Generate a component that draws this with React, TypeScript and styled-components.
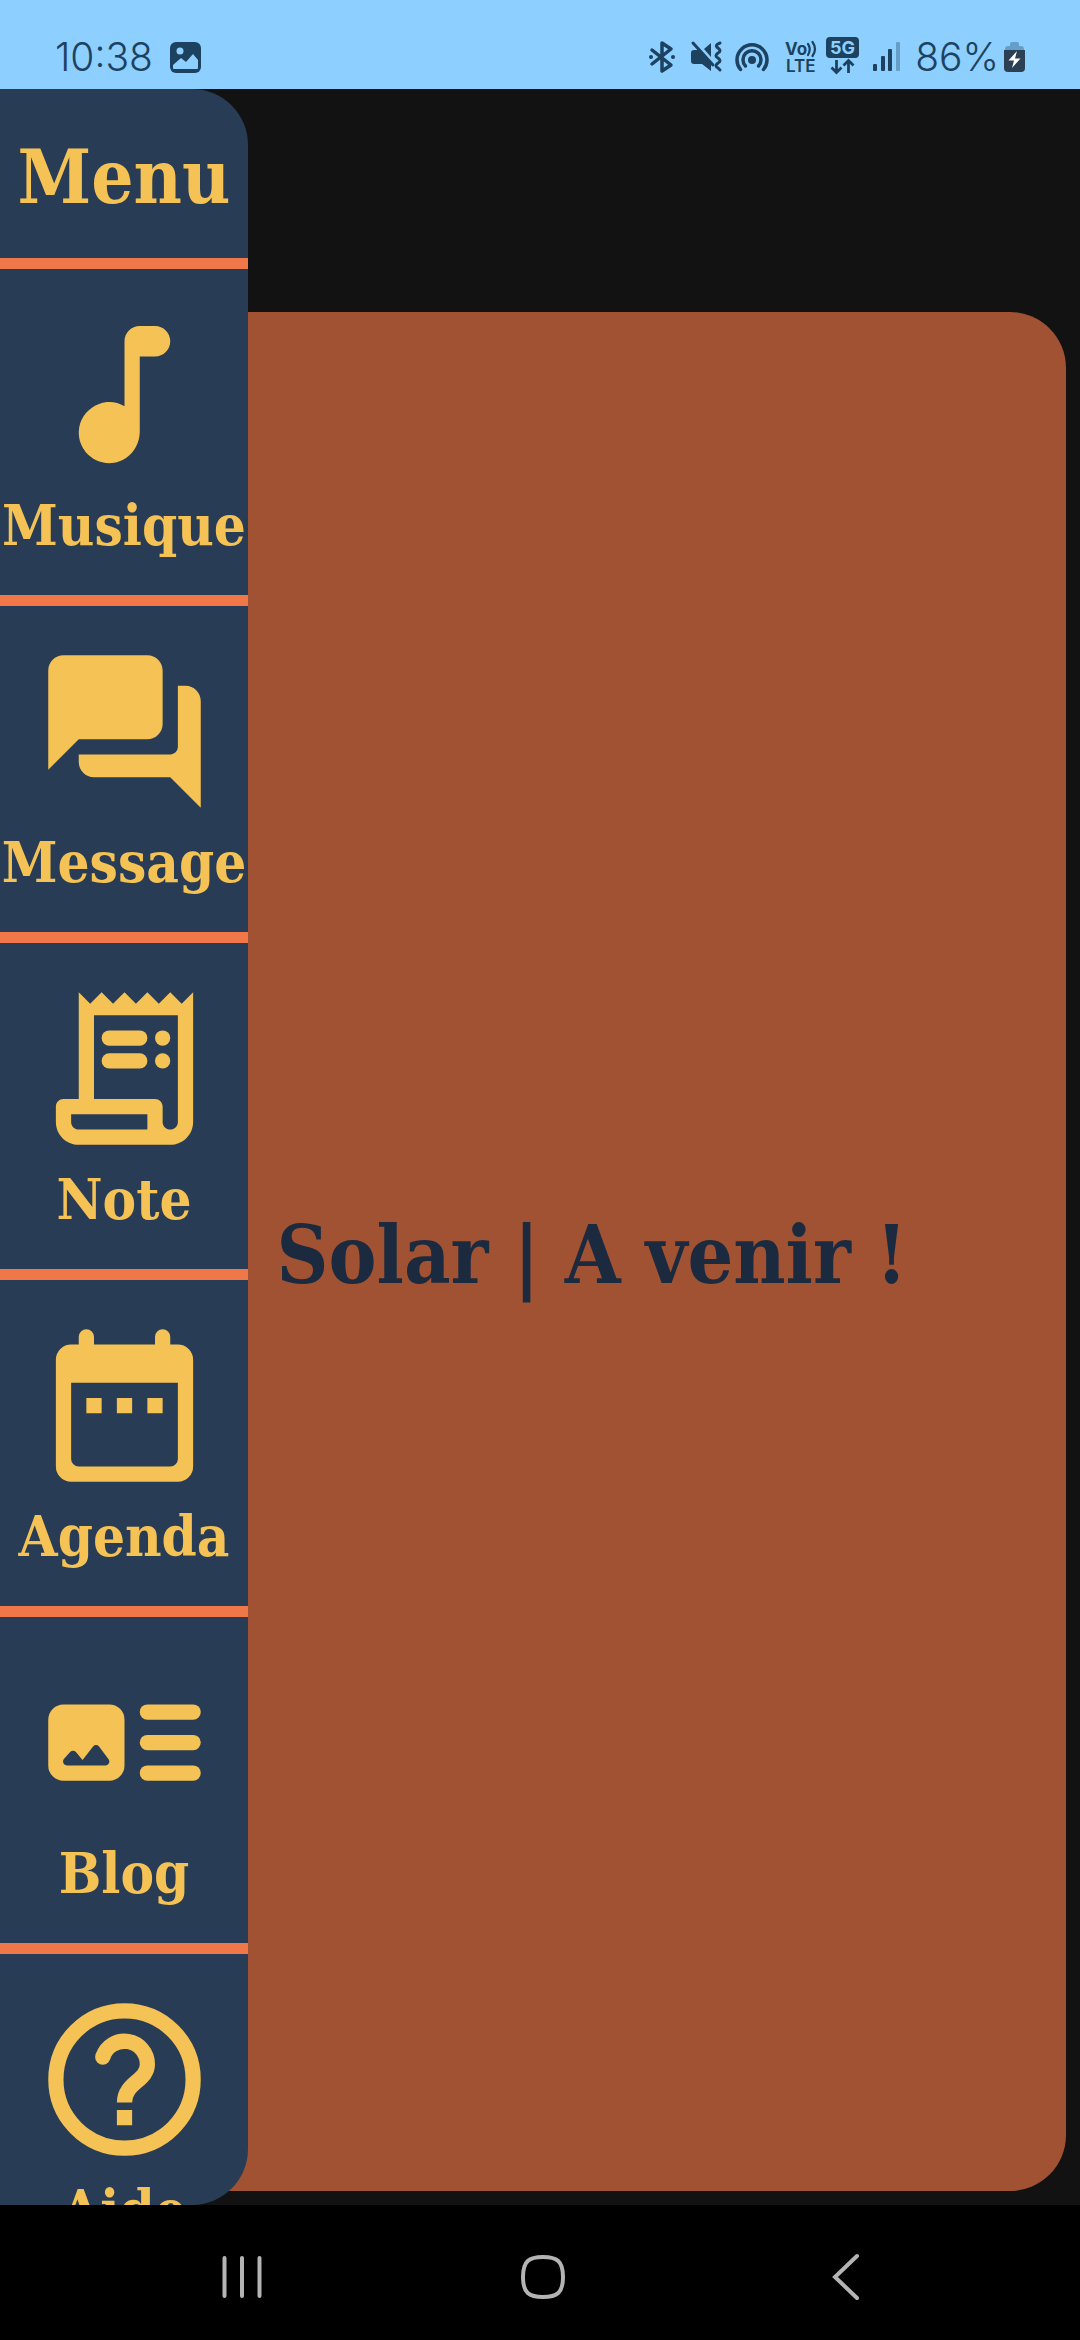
import React from 'react';
import styled, { createGlobalStyle } from 'styled-components';

const color = {
  sky: '#8dcfff',
  statusInk: '#1d4260',
  night: '#121212',
  navy: '#283d55',
  coral: '#f07848',
  gold: '#f5c255',
  rust: '#a15233',
  ink: '#1b2a3e',
  key: '#b4b4b4',
};

const slab = "'Roboto Slab', 'DejaVu Serif Condensed', 'DejaVu Serif', serif";

const GlobalStyle = createGlobalStyle`
  *, *::before, *::after { box-sizing: border-box; }
  body { margin: 0; background: ${color.night}; }
`;

const Screen = styled.div`
  display: flex;
  flex-direction: column;
  height: 100vh;
  overflow: hidden;
  background: ${color.night};
`;

const StatusBar = styled.header`
  display: flex;
  justify-content: space-between;
  padding: 37px 55px 12px 55px;
  background: ${color.sky};
  color: ${color.statusInk};
  font: 300 39px/40px Inter, Roboto, sans-serif;
`;

const StatusGroup = styled.div<{ $gap: number }>`
  display: flex;
  align-items: center;
  gap: ${({ $gap }) => $gap}px;
`;

const StatusIcon = styled.svg<{ $width?: number }>`
  display: block;
  width: ${({ $width }) => $width ?? 34}px;
  height: 40px;
  overflow: visible;
  fill: currentColor;
`;

const Power = styled.div`
  display: flex;
  align-items: center;
  gap: 5px;
`;

const Stage = styled.div`
  flex: 1;
  min-height: 0;
  display: grid;
  grid-template: minmax(0, 1fr) / minmax(0, 1fr);
`;

const Drawer = styled.nav`
  grid-area: 1 / 1;
  justify-self: start;
  z-index: 1;
  width: 248px;
  height: 100%;
  overflow: hidden auto;
  scrollbar-width: none;
  border-radius: 0 56px 56px 0;
  background: ${color.navy};
  color: ${color.gold};
  font-family: ${slab};
`;

const DrawerTitle = styled.h2`
  margin: 0;
  padding: 40px 0 33px;
  border-bottom: 11px solid ${color.coral};
  font-size: 74px;
  line-height: 96px;
  font-weight: 700;
  text-align: center;
`;

const Items = styled.ul`
  margin: 0;
  padding: 0;
  list-style: none;
`;

const Item = styled.button`
  display: flex;
  flex-direction: column;
  align-items: center;
  width: 100%;
  padding: 34px 0;
  border: 0;
  border-bottom: 11px solid ${color.coral};
  background: none;
  color: inherit;
  font: inherit;
  cursor: pointer;
`;

const ItemIcon = styled.svg`
  display: block;
  width: 183px;
  height: 183px;
  flex: none;
  fill: currentColor;
`;

const ItemLabel = styled.span`
  padding-top: 3px;
  font-size: 56px;
  line-height: 72px;
  font-weight: 700;
  white-space: nowrap;
`;

const Panel = styled.main`
  grid-area: 1 / 1;
  display: flex;
  align-items: center;
  justify-content: center;
  margin: 223px 14px 14px 118px;
  border-radius: 56px;
  background: ${color.rust};
`;

const PanelTitle = styled.h1`
  margin: 0;
  padding-top: 6px;
  color: ${color.ink};
  font-family: ${slab};
  font-size: 80px;
  line-height: 108px;
  font-weight: 700;
  white-space: nowrap;
`;

const SystemBar = styled.footer`
  display: flex;
  justify-content: center;
  padding: 9px 0 0 6px;
  background: #000;
`;

const SystemKey = styled.button`
  display: flex;
  align-items: center;
  justify-content: center;
  width: 28%;
  height: 126px;
  padding: 0;
  border: 0;
  background: none;
  color: ${color.key};
`;

const KeyIcon = styled.svg`
  width: 48px;
  height: 48px;
  fill: none;
  stroke: currentColor;
  stroke-width: 4;
  stroke-linecap: round;
`;

const entries = [
  {
    label: 'Musique',
    icon: (
      <path d="M12 5v8.55c-.94-.54-2.1-.75-3.33-.32-1.34.48-2.37 1.67-2.61 3.07-.46 2.74 1.86 5.08 4.59 4.65 1.96-.31 3.35-2.11 3.35-4.1V7h2c1.1 0 2-.9 2-2s-.9-2-2-2h-2c-1.1 0-2 .9-2 2z" />
    ),
  },
  {
    label: 'Message',
    icon: (
      <path d="M20 6h-1v8c0 .55-.45 1-1 1H6v1c0 1.1.9 2 2 2h10l4 4V8c0-1.1-.9-2-2-2zm-3 5V4c0-1.1-.9-2-2-2H4c-1.1 0-2 .9-2 2v13l4-4h9c1.1 0 2-.9 2-2z" />
    ),
  },
  {
    label: 'Note',
    icon: (
      <>
        <path d="M19.5 3.5 18 2l-1.5 1.5L15 2l-1.5 1.5L12 2l-1.5 1.5L9 2 7.5 3.5 6 2v14H4c-.55 0-1 .45-1 1v2c0 1.66 1.34 3 3 3h12c1.66 0 3-1.34 3-3V2l-1.5 1.5zM15 20H6c-.55 0-1-.45-1-1v-1h10v2zm4-1c0 .55-.45 1-1 1s-1-.45-1-1v-2c0-.55-.45-1-1-1H8V5h11v14z" />
        <rect x="9" y="7" width="6" height="2" rx="1" />
        <rect x="9" y="10" width="6" height="2" rx="1" />
        <circle cx="17" cy="8" r="1" />
        <circle cx="17" cy="11" r="1" />
      </>
    ),
  },
  {
    label: 'Agenda',
    icon: (
      <>
        <path
          fillRule="evenodd"
          d="M6 4V3a1 1 0 0 1 2 0v1h8V3a1 1 0 0 1 2 0v1h1a2 2 0 0 1 2 2v14a2 2 0 0 1-2 2H5a2 2 0 0 1-2-2V6a2 2 0 0 1 2-2h1zM5 9v10a1 1 0 0 0 1 1h12a1 1 0 0 0 1-1V9H5z"
        />
        <path d="M7 11h2v2H7zM11 11h2v2h-2zM15 11h2v2h-2z" />
      </>
    ),
  },
  {
    label: 'Blog',
    icon: (
      <>
        <path
          fillRule="evenodd"
          d="M4 7h6a2 2 0 0 1 2 2v6a2 2 0 0 1-2 2H4a2 2 0 0 1-2-2V9c0-1.1.9-2 2-2zM4.43 15h5.1c.4 0 .63-.48.38-.8l-1.25-1.67a.5.5 0 0 0-.78 0L6.5 14.3l-.87-1.05a.5.5 0 0 0-.76 0l-.82.93c-.25.33-.03.82.38.82z"
        />
        <rect x="14" y="7" width="8" height="2" rx="1" />
        <rect x="14" y="11" width="8" height="2" rx="1" />
        <rect x="14" y="15" width="8" height="2" rx="1" />
      </>
    ),
  },
  {
    label: 'Aide',
    icon: (
      <>
        <circle cx="12" cy="12" r="9" fill="none" stroke="currentColor" strokeWidth="2" />
        <path
          d="M9.15 9.05A3 3 0 0 1 15 10C15 12.2 12 12.4 12 15"
          fill="none"
          stroke="currentColor"
          strokeWidth="2"
        />
        <circle cx="9.15" cy="9.05" r="1" />
        <path d="M11 16h2v2h-2z" />
      </>
    ),
  },
];

const PictureIcon = () => (
  <StatusIcon viewBox="0 0 31 40" $width={31} aria-hidden="true">
    <rect y="5" width="31" height="31" rx="6" />
    <circle cx="10" cy="14" r="3.5" fill={color.sky} />
    <path d="M3 31V28l8-7 5 4 7-8 5 6v8q0 1-1 1H4q-1 0-1-1z" fill={color.sky} />
  </StatusIcon>
);

const BluetoothIcon = () => (
  <StatusIcon viewBox="0 0 34 40" aria-hidden="true">
    <path
      d="M7 13l19 15-9 6V6l9 6L7 27"
      fill="none"
      stroke="currentColor"
      strokeWidth="3.5"
      strokeLinejoin="round"
      strokeLinecap="round"
    />
    <circle cx="6" cy="20" r="2" />
    <circle cx="28" cy="20" r="2" />
  </StatusIcon>
);

const MutedIcon = () => (
  <StatusIcon viewBox="0 0 34 40" aria-hidden="true">
    <path d="M4 13h5l12 12v9l-9-7H4q-3 0-3-3v-8q0-3 3-3zM14 12l7-6v14z" />
    <path d="M3 6l20 22" stroke="currentColor" strokeWidth="3" strokeLinecap="round" />
    <path
      d="M30 6q-6 2-2 5 4 3 0 5-4 3 0 5 4 3 0 5-4 3 0 5l2 2"
      fill="none"
      stroke="currentColor"
      strokeWidth="3"
      strokeLinecap="round"
    />
  </StatusIcon>
);

const HotspotIcon = () => (
  <StatusIcon viewBox="0 0 34 40" aria-hidden="true">
    <g fill="none" stroke="currentColor" strokeWidth="3.5" strokeLinecap="round">
      <path d="M5.5 32.5A15 15 0 1 1 28.5 32.5" />
      <path d="M10.5 29A9 9 0 1 1 23.5 29" />
    </g>
    <circle cx="17" cy="23" r="4" />
  </StatusIcon>
);

const VolteIcon = () => (
  <StatusIcon viewBox="0 0 34 40" aria-hidden="true">
    <g fontFamily="Inter, sans-serif" fontSize="17">
      <text x="5" y="18" fontWeight="700">Vo</text>
      <text x="6" y="35" fontWeight="600">LTE</text>
    </g>
    <path
      d="M28 7q3.5 5 0 11M32.500 5q5 7 0 14"
      fill="none"
      stroke="currentColor"
      strokeWidth="2.2"
      strokeLinecap="round"
    />
  </StatusIcon>
);

const FiveGIcon = () => (
  <StatusIcon viewBox="0 0 34 40" aria-hidden="true">
    <rect x="1" y="0" width="33" height="21" rx="4" />
    <text x="17.5" y="17" fontFamily="Inter, sans-serif" fontWeight="700" fontSize="18" textAnchor="middle" fill={color.sky}>
      5G
    </text>
    <path
      d="M11.5 23v12M6.500 30.500l5 5 5-5M23.500 36V24M18.500 28.500l5-5 5 5"
      fill="none"
      stroke="currentColor"
      strokeWidth="2.8"
    />
  </StatusIcon>
);

const SignalIcon = () => (
  <StatusIcon viewBox="0 0 34 40" aria-hidden="true">
    <rect x="3" y="27" width="4" height="7" rx="1" />
    <rect x="11" y="19" width="4" height="15" rx="1" />
    <rect x="18" y="12" width="4" height="22" rx="1" />
    <rect x="26" y="5" width="4" height="29" rx="1" opacity=".35" />
  </StatusIcon>
);

const BatteryIcon = () => (
  <StatusIcon viewBox="0 0 21 40" $width={21} aria-hidden="true">
    <path d="M1 13v-1q0-3 3-3h2V7q0-2 2-2h5q2 0 2 2v2h2q3 0 3 3v1z" opacity=".35" />
    <path d="M0 13h21v18q0 4-4 4H4q-4 0-4-4z" fill="#2b3f55" />
    <path d="M13 14L4.500 23.500H10L8 31l8.500-9.500H11z" fill="#fff" />
  </StatusIcon>
);

export default function App() {
  return (
    <Screen>
      <GlobalStyle />
      <StatusBar>
        <StatusGroup $gap={17}>
          <time>10:38</time>
          <PictureIcon />
        </StatusGroup>
        <StatusGroup $gap={11}>
          <BluetoothIcon />
          <MutedIcon />
          <HotspotIcon />
          <VolteIcon />
          <FiveGIcon />
          <SignalIcon />
          <Power>
            <span>86%</span>
            <BatteryIcon />
          </Power>
        </StatusGroup>
      </StatusBar>

      <Stage>
        <Drawer aria-label="Menu">
          <DrawerTitle>Menu</DrawerTitle>
          <Items>
            {entries.map(({ label, icon }) => (
              <li key={label}>
                <Item type="button">
                  <ItemIcon viewBox="0 0 24 24" aria-hidden="true">
                    {icon}
                  </ItemIcon>
                  <ItemLabel>{label}</ItemLabel>
                </Item>
              </li>
            ))}
          </Items>
        </Drawer>
        <Panel>
          <PanelTitle>Solar | A venir !</PanelTitle>
        </Panel>
      </Stage>

      <SystemBar>
        <SystemKey type="button" aria-label="Applications récentes">
          <KeyIcon viewBox="0 0 48 48">
            <path d="M6.5 5v38M24 5v38M41.5 5v38" />
          </KeyIcon>
        </SystemKey>
        <SystemKey type="button" aria-label="Accueil">
          <KeyIcon viewBox="0 0 48 48">
            <path d="M24 4C38 4 44 8 44 24S38 44 24 44 4 40 4 24 10 4 24 4z" />
          </KeyIcon>
        </SystemKey>
        <SystemKey type="button" aria-label="Retour">
          <KeyIcon viewBox="0 0 48 48">
            <path d="M37 3L15 24l22 21" />
          </KeyIcon>
        </SystemKey>
      </SystemBar>
    </Screen>
  );
}
